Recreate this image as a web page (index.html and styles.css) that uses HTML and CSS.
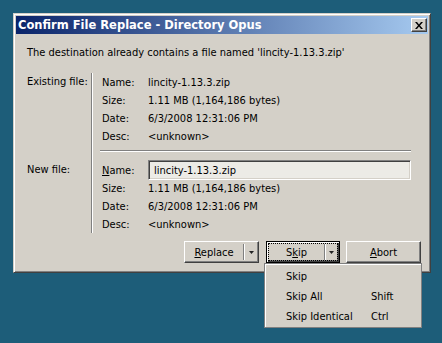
FILE: index.html
```html
<!DOCTYPE html>
<html lang="en">
<head>
  <meta charset="UTF-8">
  <title>Confirm File Replace</title>
  <link rel="stylesheet" href="styles.css">
</head>
<body>

  <div class="desktop">
    <div class="dialog">
      <div class="titlebar">
        <span class="title">Confirm File Replace - Directory Opus</span>
        <div class="close">
          <svg width="8" height="7" viewBox="0 0 8 7">
            <path d="M0 0h2l2 2.5 2-2.5h2l-3 3.5 3 3.5h-2l-2-2.5-2 2.5h-2l3-3.5z" fill="#000"/>
          </svg>
        </div>
      </div>

      <div class="content">
        <p class="message">The destination already contains a file named 'lincity-1.13.3.zip'</p>

        <div class="files">
          <div class="group-label">Existing file:</div>
          <div class="group-body">
            <div class="row"><span class="key">Name:</span><span>lincity-1.13.3.zip</span></div>
            <div class="row"><span class="key">Size:</span><span>1.11 MB (1,164,186 bytes)</span></div>
            <div class="row"><span class="key">Date:</span><span>6/3/2008 12:31:06 PM</span></div>
            <div class="row"><span class="key">Desc:</span><span>&lt;unknown&gt;</span></div>
            <div class="separator"></div>
          </div>

          <div class="group-label">New file:</div>
          <div class="group-body">
            <div class="row"><span class="key"><u>N</u>ame:</span><div class="input">lincity-1.13.3.zip</div></div>
            <div class="row"><span class="key">Size:</span><span>1.11 MB (1,164,186 bytes)</span></div>
            <div class="row"><span class="key">Date:</span><span>6/3/2008 12:31:06 PM</span></div>
            <div class="row"><span class="key">Desc:</span><span>&lt;unknown&gt;</span></div>
          </div>
        </div>
      </div>

      <div class="buttons">
        <div class="btn split replace">
          <span class="btn-main"><u>R</u>eplace</span>
          <span class="btn-arrow"><svg width="5" height="3" viewBox="0 0 5 3"><polygon points="0,0 5,0 2.5,3" fill="#222"/></svg></span>
        </div>

        <div class="btn split default skip">
          <div class="focus">
            <span class="btn-main">S<u>k</u>ip</span>
            <span class="btn-arrow"><svg width="5" height="3" viewBox="0 0 5 3"><polygon points="0,0 5,0 2.5,3" fill="#222"/></svg></span>
          </div>

          <!-- menu del boton Skip -->
          <div class="menu">
            <div class="menu-item"><span>Skip</span><span></span></div>
            <div class="menu-item"><span>Skip All</span><span>Shift</span></div>
            <div class="menu-item"><span>Skip Identical</span><span>Ctrl</span></div>
          </div>
        </div>

        <div class="btn abort"><u>A</u>bort</div>
      </div>
    </div>
  </div>

</body>
</html>
```

FILE: styles.css
```css
body {
  margin: 0;
  background: #1d5d79;
  font-family: "DejaVu Sans Condensed", "Liberation Sans", Arial, sans-serif;
  font-size: 11px;
  color: #000;
}

.desktop {
  height: 343px;
  padding: 13px 0 0 13px;
  box-sizing: border-box;
  overflow: hidden;
}

.dialog {
  width: 418px;
  height: 260px;
  box-sizing: border-box;
  background: #d4d0c8;
  border: 1px solid;
  border-color: #d4d0c8 #404040 #404040 #d4d0c8;
  box-shadow: inset 1px 1px #fff, inset -1px -1px #808080;
  padding: 2px;
}

.titlebar {
  height: 18px;
  display: flex;
  align-items: center;
  justify-content: space-between;
  padding: 0 1px 0 2px;
  background: linear-gradient(to right, #0a246a, #a6caf0);
}

.title {
  color: #fff;
  font-family: "DejaVu Sans", "Liberation Sans", Arial, sans-serif;
  font-size: 11.5px;
  font-weight: bold;
}

.close {
  width: 16px;
  height: 14px;
  box-sizing: border-box;
  background: #d4d0c8;
  border: 1px solid;
  border-color: #fff #404040 #404040 #fff;
  box-shadow: inset -1px -1px #808080;
  display: flex;
  align-items: center;
  justify-content: center;
}

.content {
  padding: 10px 17px 0 11px;
}

.message {
  margin: 0;
  line-height: 18px;
}

.files {
  display: grid;
  grid-template-columns: 64px 1fr;
  margin-top: 11px;
}

.group-label {
  line-height: 18px;
}

.group-body {
  border-left: 1px solid #808080;
  box-shadow: inset 1px 0 #fff;
  padding-left: 8px;
}

.row {
  display: flex;
  align-items: center;
  height: 18px;
  padding-left: 2px;
}

.key {
  width: 46px;
  flex: none;
}

.separator {
  border-top: 1px solid #808080;
  border-bottom: 1px solid #fff;
  margin: 5px 0 9px;
}

.input {
  flex: 1;
  height: 20px;
  margin: -1px 0;
  box-sizing: border-box;
  display: flex;
  align-items: center;
  padding-left: 5px;
  background: #ecebe6;
  border: 1px solid;
  border-color: #808080 #fff #fff #808080;
  box-shadow: inset 1px 1px #404040, inset -1px -1px #d4d0c8;
}

.buttons {
  display: flex;
  justify-content: flex-end;
  gap: 7px;
  margin-top: 8px;
  padding-right: 7px;
}

.btn {
  height: 22px;
  box-sizing: border-box;
  background: #d4d0c8;
  border: 1px solid;
  border-color: #fff #404040 #404040 #fff;
  box-shadow: inset -1px -1px #808080;
  display: flex;
  align-items: center;
  justify-content: center;
  position: relative;
}

.replace {
  width: 75px;
}

.skip {
  width: 74px;
}

.abort {
  width: 75px;
  margin-left: -1px;
}

.split {
  justify-content: stretch;
}

.btn-main {
  flex: 1;
  text-align: center;
}

.btn-arrow {
  width: 14px;
  height: 16px;
  border-left: 1px solid #808080;
  box-shadow: inset 1px 0 #fff;
  display: flex;
  align-items: center;
  justify-content: center;
}

.default {
  border-color: #000;
  box-shadow: inset 1px 1px #fff, inset -1px -1px #404040, inset -2px -2px #808080;
}

.focus {
  flex: 1;
  display: flex;
  align-items: center;
  height: 16px;
  margin: 0 2px;
  outline: 1px dotted #000;
}

.focus .btn-arrow {
  width: 12px;
}

.menu {
  position: absolute;
  left: -3px;
  top: 21px;
  width: 158px;
  box-sizing: border-box;
  background: #d4d0c8;
  border: 1px solid #808080;
  box-shadow: inset 1px 1px #fff;
  padding: 2px 0 1px;
}

.menu-item {
  display: grid;
  grid-template-columns: 85px 1fr;
  height: 20px;
  align-items: center;
  padding-left: 21px;
}
```
